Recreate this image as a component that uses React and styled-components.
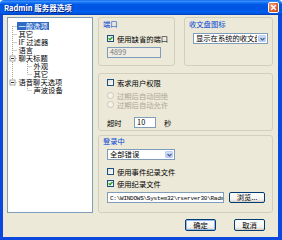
import React from 'react';
import styled, { createGlobalStyle, css } from 'styled-components';

const GlobalStyle = createGlobalStyle`
  html, body { margin: 0; padding: 0; background: #ffffff; }
  body {
    font-family: "Noto Sans CJK SC", "Noto Sans", sans-serif;
    font-size: 7.3px;
    color: #000;
  }
  * { box-sizing: border-box; }
`;

const Window = styled.div`
  width: 282px;
  height: 240px;
  display: flex;
  flex-direction: column;
  border-radius: 4px 4px 0 0;
  overflow: hidden;
`;

const TitleBar = styled.div`
  height: 15px;
  flex: none;
  display: flex;
  align-items: center;
  justify-content: space-between;
  padding: 0 3px 0 4px;
  background: linear-gradient(180deg, #0a5ff0 0%, #3d95ff 8%, #1a78f5 16%, #0058e6 30%, #0055e3 60%, #0060f0 80%, #0050d8 92%, #003ab0 100%);
`;

const Title = styled.span`
  color: #fff;
  font-weight: bold;
  font-size: 7.5px;
  line-height: 9px;
  text-shadow: 1px 1px 0 #0a1e7a;
  white-space: nowrap;
`;

const CloseButton = styled.div`
  width: 11px;
  height: 11px;
  border: 1px solid #fff;
  border-radius: 2px;
  background: radial-gradient(circle at 35% 30%, #f4a484 0%, #e2602f 55%, #c43d10 100%);
  display: flex;
  align-items: center;
  justify-content: center;
`;

const Frame = styled.div`
  flex: 1;
  display: flex;
  flex-direction: column;
  background: #ece9d8;
  border-style: solid;
  border-color: #0a48e0;
  border-width: 0 4px 3px 3px;
`;

const Main = styled.div`
  display: flex;
  gap: 5px;
  padding: 2px 5px 0 4px;
  height: 198px;
`;

const Tree = styled.div`
  width: 86px;
  height: 196px;
  flex: none;
  background: #fff;
  border: 1px solid #7f9db9;
  padding-top: 4px;
  display: flex;
  flex-direction: column;
`;

const TreeRow = styled.div`
  display: flex;
  align-items: center;
  height: 8px;
  flex: none;
  white-space: nowrap;
`;

const TreeLabel = styled.span`
  padding: 0 1.5px;
  line-height: 8px;
  height: 8px;
  display: block;
  ${p => p.$selected && css`
    background: #316ac5;
    color: #fff;
  `}
`;

const LineSvg = styled.svg`
  display: block;
  flex: none;
`;

const dot = { stroke: '#a0a0a0', strokeWidth: 1, strokeDasharray: '1 1' };

const Connector = ({ up, down, expander }) => (
  <LineSvg width="9" height="8" viewBox="0 0 9 8">
    {up && <line x1="4.5" y1="0" x2="4.5" y2="4" {...dot} />}
    {down && <line x1="4.5" y1="4" x2="4.5" y2="8" {...dot} />}
    <line x1="4.5" y1="4.5" x2="9" y2="4.5" {...dot} />
    {expander && (
      <g>
        <rect x="2" y="2" width="5" height="5" fill="#fff" stroke="#8e8f8f" strokeWidth="0.8" />
        <line x1="3" y1="4.5" x2="6" y2="4.5" stroke="#000" strokeWidth="0.8" />
      </g>
    )}
  </LineSvg>
);

const Spacer = ({ line }) => (
  <LineSvg width="15" height="8" viewBox="0 0 15 8">
    {line && <line x1="4.5" y1="0" x2="4.5" y2="8" {...dot} />}
  </LineSvg>
);

const RightCol = styled.div`
  width: 175px;
  display: flex;
  flex-direction: column;
`;

const TopRow = styled.div`
  display: flex;
  gap: 9px;
  height: 49px;
`;

const Group = styled.div`
  border: 1px solid #d0d0bf;
  border-radius: 3px;
  display: flex;
  flex-direction: column;
  align-items: flex-start;
  padding-left: 8px;
  ${p => p.$w && css`width: ${p.$w}px;`}
  ${p => p.$h && css`height: ${p.$h}px; flex: none;`}
  ${p => p.$grow && css`flex: 1;`}
  ${p => p.$mt && css`margin-top: ${p.$mt}px;`}
`;

const GroupLabel = styled.div`
  color: #0046d5;
  line-height: 9px;
  margin-left: -4px;
  margin-top: ${p => p.$mt}px;
  white-space: nowrap;
`;

const CheckRow = styled.div`
  display: flex;
  align-items: center;
  gap: 3px;
  height: 9px;
  margin-top: ${p => p.$mt || 0}px;
  white-space: nowrap;
  color: ${p => (p.$disabled ? '#aca899' : '#000')};
`;

const CheckBox = styled.span`
  width: 7px;
  height: 7px;
  flex: none;
  border: 1px solid #1c5180;
  background: linear-gradient(135deg, #dcdcd7, #ffffff);
  display: flex;
  align-items: center;
  justify-content: center;
`;

const Radio = styled.span`
  width: 7px;
  height: 7px;
  flex: none;
  border-radius: 50%;
  border: 1px solid #cac8bb;
  background: #f5f4ea;
`;

const Check = () => (
  <svg width="5" height="5" viewBox="0 0 5 5">
    <path d="M0.6 2.4 L2 3.8 L4.5 1" fill="none" stroke="#21a121" strokeWidth="1.3" />
  </svg>
);

const TextBox = styled.div`
  height: ${p => p.$h || 11}px;
  width: ${p => p.$w}px;
  flex: none;
  margin-top: ${p => p.$mt || 0}px;
  border: 1px solid #7f9db9;
  background: ${p => (p.$disabled ? '#efede3' : '#fff')};
  color: ${p => (p.$disabled ? '#7a7a7a' : '#000')};
  padding-left: 2px;
  line-height: 9px;
  overflow: hidden;
  white-space: nowrap;
`;

const PathText = styled.span`
  font-family: "Liberation Mono", "DejaVu Sans Mono", monospace;
  font-size: 6px;
  letter-spacing: -0.25px;
`;

const Combo = styled.div`
  display: flex;
  align-items: stretch;
  width: ${p => p.$w}px;
  height: 11px;
  margin-top: ${p => p.$mt}px;
  border: 1px solid #7f9db9;
  background: #fff;
`;

const ComboText = styled.span`
  flex: 1;
  min-width: 0;
  line-height: 9px;
  padding-left: 2px;
  overflow: hidden;
  white-space: nowrap;
`;

const ComboArrow = styled.span`
  width: 8px;
  flex: none;
  margin: 1px;
  border-radius: 1px;
  background: linear-gradient(180deg, #d4e1fc, #b4c8f6);
  border: 1px solid #b9cdf7;
  display: flex;
  align-items: center;
  justify-content: center;
`;

const Chevron = () => (
  <svg width="5" height="4" viewBox="0 0 5 4">
    <path d="M0.5 1 L2.5 3 L4.5 1" fill="none" stroke="#4d6185" strokeWidth="1.1" />
  </svg>
);

const TimeoutRow = styled.div`
  display: flex;
  align-items: center;
  height: 11px;
  margin-top: 8px;
  white-space: nowrap;
`;

const TimeoutLabel = styled.span`
  margin-right: 12.5px;
`;

const Unit = styled.span`
  margin-left: 8px;
`;

const PathRow = styled.div`
  display: flex;
  align-items: center;
  gap: 5px;
  margin-top: 4px;
`;

const Button = styled.div`
  width: ${p => p.$w || 31}px;
  height: ${p => p.$h || 12}px;
  flex: none;
  border: 1px solid #003c74;
  border-radius: 2px;
  background: linear-gradient(180deg, #ffffff 0%, #f3f3ef 70%, #d6d0c5 100%);
  display: flex;
  align-items: center;
  justify-content: center;
  line-height: 9px;
  white-space: nowrap;
  ${p => p.$default && css`box-shadow: inset 0 0 0 1px #98b8ea;`}
`;

const ButtonRow = styled.div`
  display: flex;
  justify-content: flex-end;
  gap: 18px;
  padding: 6px 13px 0 0;
`;

const treeItems = [
  { label: '一般选项', level: 1, up: false, down: true, selected: true },
  { label: '其它', level: 1, up: true, down: true },
  { label: 'IF 过滤器', level: 1, up: true, down: true },
  { label: '语言', level: 1, up: true, down: true },
  { label: '聊天标题', level: 1, up: true, down: true, expander: true },
  { label: '外观', level: 2, rootLine: true, up: true, down: true },
  { label: '其它', level: 2, rootLine: true, up: true, down: false },
  { label: '语音聊天选项', level: 1, up: true, down: false, expander: true },
  { label: '声波设备', level: 2, rootLine: false, up: true, down: false },
];

export default function App() {
  return (
    <>
      <GlobalStyle />
      <Window>
        <TitleBar>
          <Title>Radmin 服务器选项</Title>
          <CloseButton>
            <svg width="7" height="7" viewBox="0 0 7 7">
              <path d="M1 1 L6 6 M6 1 L1 6" stroke="#fff" strokeWidth="1.4" />
            </svg>
          </CloseButton>
        </TitleBar>
        <Frame>
          <Main>
            <Tree>
              {treeItems.map((it, i) => (
                <TreeRow key={i}>
                  {it.level === 2 && <Spacer line={it.rootLine} />}
                  <Connector up={it.up} down={it.down} expander={it.expander} />
                  <TreeLabel $selected={it.selected}>{it.label}</TreeLabel>
                </TreeRow>
              ))}
            </Tree>
            <RightCol>
              <TopRow>
                <Group $w={77}>
                  <GroupLabel $mt={2}>端口</GroupLabel>
                  <CheckRow $mt={5}>
                    <CheckBox><Check /></CheckBox>
                    使用缺省的端口
                  </CheckRow>
                  <TextBox $w={54} $mt={4} $disabled>4899</TextBox>
                </Group>
                <Group $grow>
                  <GroupLabel $mt={2}>收文盘图标</GroupLabel>
                  <Combo $w={75} $mt={4}>
                    <ComboText>显示在系统的收文盘中</ComboText>
                    <ComboArrow><Chevron /></ComboArrow>
                  </Combo>
                </Group>
              </TopRow>
              <Group $h={58} $mt={7}>
                <CheckRow $mt={4}>
                  <CheckBox />
                  索求用户权限
                </CheckRow>
                <CheckRow $mt={4} $disabled>
                  <Radio />
                  过期后自动回绝
                </CheckRow>
                <CheckRow $disabled>
                  <Radio />
                  过期后自动允许
                </CheckRow>
                <TimeoutRow>
                  <TimeoutLabel>超时</TimeoutLabel>
                  <TextBox $w={22}>10</TextBox>
                  <Unit>秒</Unit>
                </TimeoutRow>
              </Group>
              <Group $h={78} $mt={4}>
                <GroupLabel $mt={0.5}>登录中</GroupLabel>
                <Combo $w={68} $mt={3.5}>
                  <ComboText>全部错误</ComboText>
                  <ComboArrow><Chevron /></ComboArrow>
                </Combo>
                <CheckRow $mt={7}>
                  <CheckBox />
                  使用事件纪录文件
                </CheckRow>
                <CheckRow $mt={3}>
                  <CheckBox><Check /></CheckBox>
                  使用纪录文件
                </CheckRow>
                <PathRow>
                  <TextBox $w={117}>
                    <PathText>C:\WINDOWS\System32\rserver30\Radmin.log</PathText>
                  </TextBox>
                  <Button $w={36} $h={11}>浏览...</Button>
                </PathRow>
              </Group>
            </RightCol>
          </Main>
          <ButtonRow>
            <Button $default>确定</Button>
            <Button>取消</Button>
          </ButtonRow>
        </Frame>
      </Window>
    </>
  );
}
